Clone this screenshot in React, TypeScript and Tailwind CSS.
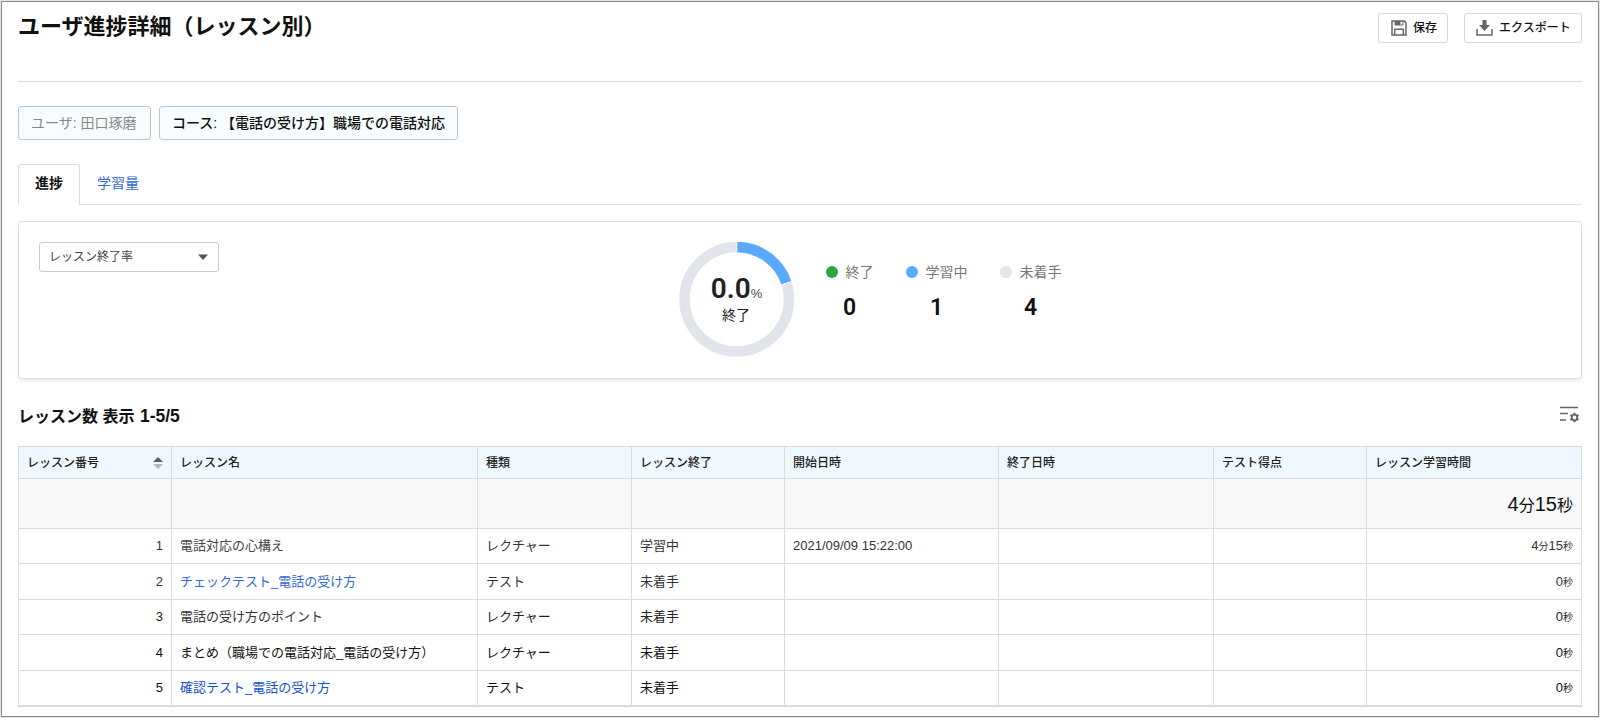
import { clsx } from "clsx";

type Lesson = {
  no: number;
  name: string;
  type: string;
  status: string;
  startedAt?: string;
  minutes?: number;
  seconds: number;
  link?: boolean;
  rowClass: string;
  nameClass: string;
  textClass: string;
};

const lessons: Lesson[] = [
  { no: 1, name: "電話対応の心構え", type: "レクチャー", status: "学習中", startedAt: "2021/09/09 15:22:00", minutes: 4, seconds: 15, rowClass: "h-[35px]", nameClass: "text-[#444]", textClass: "text-[#333]" },
  { no: 2, name: "チェックテスト_電話の受け方", type: "テスト", status: "未着手", seconds: 0, link: true, rowClass: "h-9", nameClass: "text-[#3367d6]", textClass: "text-[#333]" },
  { no: 3, name: "電話の受け方のポイント", type: "レクチャー", status: "未着手", seconds: 0, rowClass: "h-[35px]", nameClass: "text-[#333]", textClass: "text-[#222]" },
  { no: 4, name: "まとめ（職場での電話対応_電話の受け方）", type: "レクチャー", status: "未着手", seconds: 0, rowClass: "h-9", nameClass: "text-[#111]", textClass: "text-[#111]" },
  { no: 5, name: "確認テスト_電話の受け方", type: "テスト", status: "未着手", seconds: 0, link: true, rowClass: "h-[35px]", nameClass: "text-[#1450d2]", textClass: "text-[#111]" },
];

const columns = [
  { label: "レッスン番号", className: "w-[153px]", sortable: true },
  { label: "レッスン名", className: "w-[306px]" },
  { label: "種類", className: "w-[154px]" },
  { label: "レッスン終了", className: "w-[153px]" },
  { label: "開始日時", className: "w-[214px]" },
  { label: "終了日時", className: "w-[215px]" },
  { label: "テスト得点", className: "w-[153px]" },
  { label: "レッスン学習時間", className: "w-[215px]" },
];

const stats = [
  { label: "終了", value: 0, dot: "bg-[#28a745]", className: "w-[47px]" },
  { label: "学習中", value: 1, dot: "bg-[#58a9ff]", className: "w-[61px]" },
  { label: "未着手", value: 4, dot: "bg-[#e1e4ea]", className: "w-[61px]" },
];

function SaveIcon() {
  return (
    <svg width="16" height="16" viewBox="0 0 16 16" fill="none" stroke="#666" strokeWidth="1.5">
      <path d="M1 1h12.500L15 2.500V15H1z" />
      <path d="M3.700 15V9.200h8.600V15" />
      <path d="M4 1v4h8V1" strokeWidth="1" />
      <path d="M4 1h5.500v4H4z" fill="#666" stroke="none" />
    </svg>
  );
}

function ExportIcon() {
  return (
    <svg width="17" height="16" viewBox="0 0 17 16" fill="none">
      <path d="M1 9v6h15V9" stroke="#666" strokeWidth="1.5" />
      <path d="M6.500 0h4v5H14l-5.500 6L3 5h3.500z" fill="#666" />
    </svg>
  );
}

function ColumnSettingsIcon() {
  return (
    <svg width="20" height="17" viewBox="0 0 20 17" fill="none" stroke="#666">
      <path d="M0 1.500h18M0 7.500h8M0 14h6" strokeWidth="1.5" />
      <path d="M14.500 6.800V9M14.500 14V16.200M10.400 9.100l2 1.100M16.600 12.800l2 1.100M18.600 9.100l-2 1.100M12.400 12.800l-2 1.100" strokeWidth="2" />
      <circle cx="14.500" cy="11.500" r="2.800" strokeWidth="1.800" />
    </svg>
  );
}

function SortIcon() {
  return (
    <svg width="10" height="12" viewBox="0 0 10 12">
      <path d="M0 5L5 0l5 5z" fill="#5a6068" />
      <path d="M0 7l5 5 5-5z" fill="#b4b8bc" />
    </svg>
  );
}

function Donut() {
  return (
    <div className="relative h-[116px] w-[116px]">
      <svg width="116" height="116" viewBox="0 0 116 116" fill="none">
        <circle cx="57.700" cy="57.300" r="52.200" stroke="#e1e4ea" strokeWidth="10.500" />
        <path d="M57.700 5.100A52.200 52.200 0 0 1 107.350 41.170" stroke="#58a9ff" strokeWidth="10.500" />
        <path d="M57.700 0v11M102.400 42.800l11.400-3.700" stroke="#fff" strokeWidth="1" />
      </svg>
      <div className="absolute inset-0 flex flex-col items-center pt-[33px]">
        <div className="flex items-baseline pr-px leading-7 text-[#222]">
          <span className="font-['Roboto'] text-[28px] font-semibold">0.0</span>
          <span className="text-[13px] text-[#444]">%</span>
        </div>
        <div className="-mt-[3px] pr-[2px] text-sm leading-5 text-[#222]">終了</div>
      </div>
    </div>
  );
}

function Duration({ minutes, seconds, unitClass }: { minutes?: number; seconds: number; unitClass: string }) {
  return (
    <>
      {minutes !== undefined && (
        <>
          {minutes}
          <span className={unitClass}>分</span>
        </>
      )}
      {seconds}
      <span className={unitClass}>秒</span>
    </>
  );
}

function Header() {
  return (
    <header className="flex h-[80px] items-start justify-between border-b border-[#dadada]">
      <h1 className="mt-[9px] text-[22px] font-bold leading-8 text-[#111]">ユーザ進捗詳細（レッスン別）</h1>
      <div className="mt-[11px] flex gap-4 text-xs font-medium text-[#111]">
        <button className="flex h-[30px] w-[70px] items-center gap-[6px] rounded-[3px] border border-[#d8d8d8] pl-3">
          <SaveIcon />
          保存
        </button>
        <button className="flex h-[30px] w-[118px] items-center gap-[6px] rounded-[3px] border border-[#d8d8d8] pl-[11px]">
          <ExportIcon />
          エクスポート
        </button>
      </div>
    </header>
  );
}

function Tabs() {
  return (
    <nav className="mt-6 flex h-[41px] text-sm">
      <div className="flex w-[62px] items-center justify-center rounded-t-[3px] border border-b-0 border-[#dcdcdc] pb-1 font-bold text-[#111]">進捗</div>
      <div className="flex flex-1 items-center border-b border-[#e0e0e0] pb-[2px] pl-[17px] text-[#3367d6]">学習量</div>
    </nav>
  );
}

function SummaryCard() {
  return (
    <section className="mt-4 flex h-[158px] items-start rounded-[3px] border border-[#e0e0e0] pl-5 pt-5 shadow-[0_2px_4px_rgba(0,0,0,0.08)]">
      <div className="flex h-[30px] w-[180px] items-center justify-between rounded-[3px] border border-[#ccc] pb-px pl-[9px] pr-[10px] text-xs text-[#444]">
        レッスン終了率
        <svg width="10" height="6" viewBox="0 0 10 6">
          <path d="M0 .5h10L5 6z" fill="#555" />
        </svg>
      </div>
      <div className="ml-[460px]">
        <Donut />
      </div>
      <div className="ml-[31px] mt-5 flex gap-[33px]">
        {stats.map((stat) => (
          <div key={stat.label} className={clsx("flex flex-col items-center", stat.className)}>
            <div className="flex items-center gap-2 whitespace-nowrap text-sm leading-5 text-[#777]">
              <span className={clsx("h-3 w-3 shrink-0 rounded-full", stat.dot)} />
              {stat.label}
            </div>
            <div className="mt-3 font-['Roboto'] text-[23px] font-semibold leading-7 text-[#111]">{stat.value}</div>
          </div>
        ))}
      </div>
    </section>
  );
}

function LessonTable() {
  return (
    <table className="mt-[19px] w-[1564px] table-fixed border-collapse border-b-2 border-[#dadada] text-[13px] [&_td]:border [&_td]:border-[#dadada] [&_td]:px-2 [&_td]:py-0 [&_th]:border [&_th]:border-[#dadada] [&_th]:px-2">
      <thead>
        <tr className="h-8 bg-[#f0f8ff] text-left text-xs text-[#222]">
          {columns.map((col) => (
            <th key={col.label} className={clsx("py-0 font-medium", col.className)}>
              <div className="flex items-center justify-between">
                {col.label}
                {col.sortable && <SortIcon />}
              </div>
            </th>
          ))}
        </tr>
      </thead>
      <tbody>
        <tr className="h-[50px] bg-[#f8f8f8]">
          {columns.slice(0, -1).map((col) => (
            <td key={col.label} />
          ))}
          <td className="text-right text-xl text-[#111]">
            <Duration minutes={4} seconds={15} unitClass="text-base" />
          </td>
        </tr>
        {lessons.map((lesson) => (
          <tr key={lesson.no} className={clsx(lesson.rowClass, lesson.textClass)}>
            <td className="text-right">{lesson.no}</td>
            <td className={lesson.nameClass}>{lesson.link ? <a href="#">{lesson.name}</a> : lesson.name}</td>
            <td>{lesson.type}</td>
            <td>{lesson.status}</td>
            <td>{lesson.startedAt}</td>
            <td />
            <td />
            <td className="text-right">
              <Duration minutes={lesson.minutes} seconds={lesson.seconds} unitClass="text-[10px]" />
            </td>
          </tr>
        ))}
      </tbody>
    </table>
  );
}

export default function App() {
  return (
    <div className="h-[718px] w-[1600px] overflow-hidden bg-[#e6e6e6] p-px font-['Liberation_Sans','Noto_Sans_CJK_JP',sans-serif]">
      <div className="h-[716px] border border-[#888] bg-white px-4">
        <Header />
        <div className="mt-6 flex gap-2 text-sm">
          <div className="flex h-[34px] w-[133px] items-center rounded-[3px] border border-[#b4c6e0] bg-[#f7fcff] pl-3 text-[#888]">ユーザ: 田口琢磨</div>
          <div className="flex h-[34px] w-[299px] items-center rounded-[3px] border border-[#b4c6e0] bg-[#f7fcff] pl-3 font-medium text-[#111]">コース: 【電話の受け方】職場での電話対応</div>
        </div>
        <Tabs />
        <SummaryCard />
        <div className="mt-6 flex h-6 items-start justify-between pr-[2px] pt-[3px]">
          <h2 className="-mt-[2px] text-base font-bold leading-6 text-[#111]">
            レッスン数 表示 <span className="ml-px text-[17.5px]">1-5/5</span>
          </h2>
          <ColumnSettingsIcon />
        </div>
        <LessonTable />
      </div>
    </div>
  );
}
